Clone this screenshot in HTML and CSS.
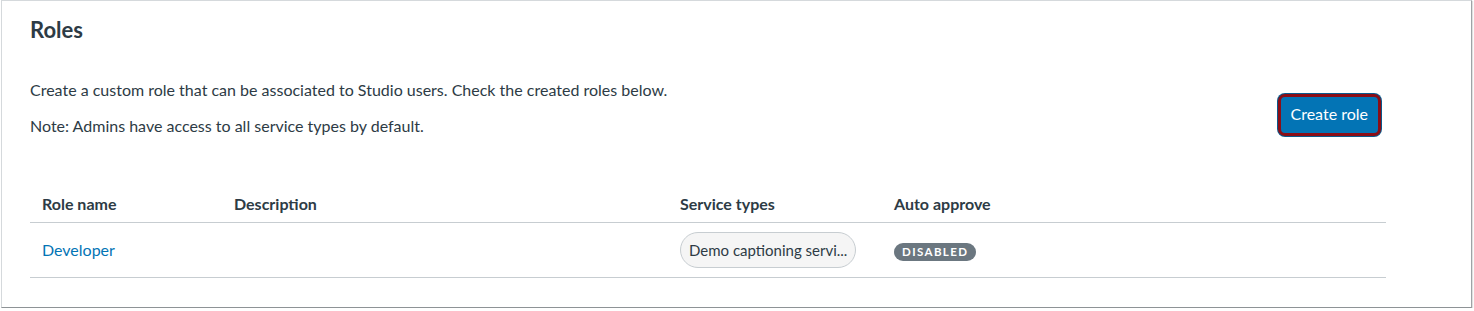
FILE: index.html
```html
<!DOCTYPE html>
<html lang="en">
<head>
  <meta charset="UTF-8" />
  <title>Roles</title>
  <link rel="stylesheet" href="styles.css">
</head>
<body>
  <div class="panel">
    <h2 class="title">Roles</h2>
    <div class="intro">
      <div class="intro-text">
        <p>Create a custom role that can be associated to Studio users. Check the created roles below.</p>
        <p>Note: Admins have access to all service types by default.</p>
      </div>
      <button class="create-button">Create role</button>
    </div>

    <table class="roles-table">
      <thead>
        <tr>
          <th class="col-name">Role name</th>
          <th class="col-desc">Description</th>
          <th class="col-types">Service types</th>
          <th>Auto approve</th>
        </tr>
      </thead>
      <tbody>
        <tr>
          <td><a href="#" class="role-link">Developer</a></td>
          <td></td>
          <td><span class="chip">Demo captioning servi...</span></td>
          <td><span class="badge">Disabled</span></td>
        </tr>
      </tbody>
    </table>
  </div>
</body>
</html>
```

FILE: styles.css
```css
body {
  margin: 0;
  font-family: Lato, 'Noto Sans', sans-serif;
  color: #2d3b45;
  background: #fff;
}
.panel {
  box-sizing: border-box;
  margin-left: 1px;
  width: 1471px;
  height: 308px;
  border: 1px solid #d5d9dc;
  border-right-color: #9ea3a6;
  border-bottom-color: #8e9396;
  box-shadow: 1px 1px 1px rgba(0, 0, 0, 0.12);
  padding: 15px 85px 0 28px;
}
.title {
  margin: 0;
  font-size: 22px;
  font-weight: 700;
  line-height: 28px;
}
.intro {
  display: flex;
  justify-content: space-between;
  margin-top: 34px;
}
.intro-text p {
  margin: 0 0 12px;
  font-size: 16px;
  line-height: 24px;
}
.create-button {
  align-self: flex-start;
  margin: 16px 5px 0 0;
  font-family: inherit;
  font-size: 16px;
  line-height: 24px;
  color: #fff;
  background: #0374b5;
  border: 3px solid #8b0d16;
  border-radius: 7px;
  padding: 5px 10px 7px;
  box-shadow: 0 0 0 1px #0a5a8c;
  cursor: pointer;
}
.roles-table {
  width: 100%;
  margin-top: 36px;
  border-collapse: collapse;
  font-size: 16px;
}
.roles-table th {
  text-align: left;
  font-weight: 700;
  line-height: 24px;
  padding: 6px 12px 6px;
  border-bottom: 1px solid #c7cdd1;
}
.roles-table td {
  line-height: 24px;
  padding: 9px 12px 9px;
  height: 36px;
  border-bottom: 1px solid #c7cdd1;
}
.col-name {
  width: 168px;
}
.col-desc {
  width: 422px;
}
.col-types {
  width: 190px;
}
.role-link {
  color: #0374b5;
  text-decoration: none;
}
.chip {
  display: inline-block;
  box-sizing: border-box;
  height: 36px;
  padding: 5px 8px;
  border: 1px solid #c7cdd1;
  border-radius: 18px;
  background: #f5f5f5;
  color: #2d3b45;
  font-size: 15px;
  white-space: nowrap;
  vertical-align: middle;
}
.badge {
  display: inline-block;
  padding: 0 8px;
  height: 18px;
  line-height: 18px;
  border-radius: 9px;
  background: #6b7780;
  color: #fff;
  font-size: 11.5px;
  font-weight: 700;
  letter-spacing: 1.4px;
  text-transform: uppercase;
  vertical-align: middle;
}
```
